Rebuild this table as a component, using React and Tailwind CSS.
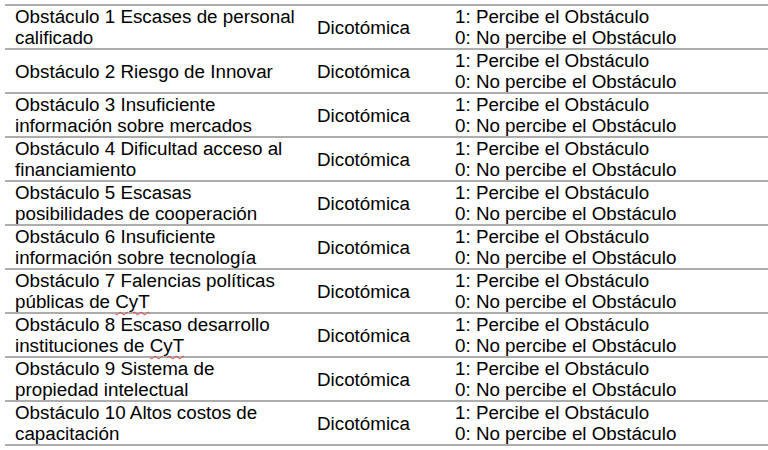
const rows = [
  ['Obstáculo 1 Escases de personal', 'calificado'],
  ['Obstáculo 2 Riesgo de Innovar'],
  ['Obstáculo 3 Insuficiente', 'información sobre mercados'],
  ['Obstáculo 4 Dificultad acceso al', 'financiamiento'],
  ['Obstáculo 5 Escasas', 'posibilidades de cooperación'],
  ['Obstáculo 6 Insuficiente', 'información sobre tecnología'],
  ['Obstáculo 7 Falencias políticas', 'públicas de ', 'CyT'],
  ['Obstáculo 8 Escaso desarrollo', 'instituciones de ', 'CyT'],
  ['Obstáculo 9 Sistema de', 'propiedad intelectual'],
  ['Obstáculo 10 Altos costos de', 'capacitación'],
]

function Label({ lines }) {
  const [first, second, marked] = lines
  return (
    <div>
      <div>{first}</div>
      {second && (
        <div>
          {second}
          {marked && (
            <span className="underline decoration-wavy decoration-[#e03c3c] decoration-1 underline-offset-[3px]">{marked}</span>
          )}
        </div>
      )}
    </div>
  )
}

export default function App() {
  return (
    <div className="w-[768px] h-[450px] bg-white overflow-hidden pt-[4px] pl-[5px] text-[18.8px] leading-[21px] text-black font-['Liberation_Sans',Arial,sans-serif]">
      <div className="border-b-2 border-[#adadad]">
        {rows.map((r, i) => (
          <div key={i} className="grid grid-cols-[302px_138px_1fr] h-[44px] border-t-2 border-[#adadad]">
            <div className="flex items-center pl-[10px] whitespace-nowrap">
              <Label lines={r} />
            </div>
            <div className="flex items-center pl-[10px]">Dicotómica</div>
            <div className="flex flex-col justify-center pl-[10px] whitespace-nowrap">
              <div>1: Percibe el Obstáculo</div>
              <div>0: No percibe el Obstáculo</div>
            </div>
          </div>
        ))}
      </div>
    </div>
  )
}
